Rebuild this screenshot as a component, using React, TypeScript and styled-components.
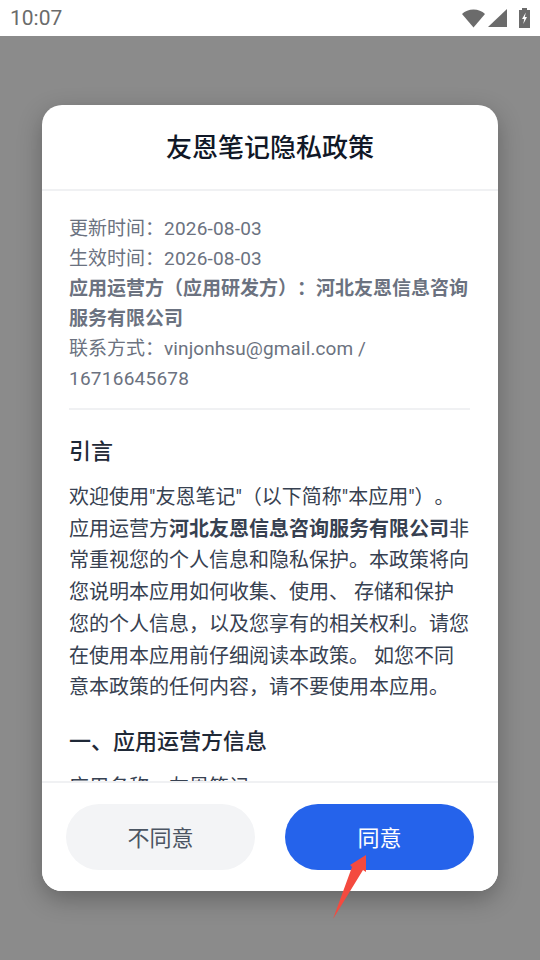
import React from 'react';
import styled, { createGlobalStyle } from 'styled-components';

// full-width punctuation used in the policy text
const COLON = '\uFF1A';
const LP = '\uFF08';
const RP = '\uFF09';
const COMMA = '\uFF0C';

const GlobalStyle = createGlobalStyle`
  html, body {
    margin: 0;
    padding: 0;
    height: 960px;
    overflow: hidden;
    background: #8b8b8b;
    font-family: Roboto, "Noto Sans CJK SC", sans-serif;
    text-spacing-trim: space-all;
  }
`;

const Page = styled.div`
  width: 540px;
  height: 960px;
  display: flex;
  flex-direction: column;
  position: relative;
  overflow: hidden;
`;

const StatusBar = styled.div`
  height: 36px;
  flex: none;
  background: #fff;
  display: flex;
  align-items: center;
  justify-content: space-between;
  padding: 0 10px 0 10px;
  color: #6b6b6b;
`;

const Clock = styled.span`
  font-size: 21px;
  line-height: 36px;
`;

const StatusIcons = styled.div`
  display: flex;
  align-items: center;
  gap: 3px;
`;

const Scrim = styled.div`
  flex: 1;
  display: flex;
  justify-content: center;
  padding-top: 69px;
  background: #8b8b8b;
`;

const Dialog = styled.div`
  width: 456px;
  height: 786px;
  background: #fff;
  border-radius: 20px;
  box-shadow: 0 8px 24px rgba(0, 0, 0, 0.28);
  display: flex;
  flex-direction: column;
  overflow: hidden;
`;

const Header = styled.div`
  height: 86px;
  flex: none;
  border-bottom: 2px solid #f0f1f3;
  display: flex;
  align-items: center;
  justify-content: center;
  padding-bottom: 4px;
  box-sizing: border-box;
`;

const Title = styled.h1`
  margin: 0;
  font-size: 26px;
  font-weight: 500;
  color: #111827;
`;

const Body = styled.div`
  flex: 1;
  min-height: 0;
  overflow: hidden;
  padding: 23px 28px 0 27px;
`;

const Meta = styled.div`
  font-size: 19px;
  line-height: 30px;
  color: #6b7280;
  padding-bottom: 14px;
  border-bottom: 2px solid #f0f1f3;
  margin-bottom: 27px;
`;

const MetaStrong = styled.strong`
  font-weight: 700;
  color: #6b7280;
`;

const Latin = styled.span<{ $spacing: number }>`
  letter-spacing: ${p => p.$spacing}px;
`;

const SectionTitle = styled.h2`
  margin: 0 0 15px;
  font-size: 22px;
  line-height: 30px;
  font-weight: 500;
  color: #1f2937;
`;

const Paragraph = styled.p`
  margin: 0 0 23px;
  font-size: 20px;
  line-height: 31.7px;
  color: #374151;
`;

const Strong = styled.strong`
  font-weight: 700;
  color: #374151;
`;

const Footer = styled.div`
  height: 110px;
  flex: none;
  border-top: 2px solid #f0f1f3;
  background: #fff;
  display: flex;
  gap: 30px;
  padding: 21px 24px 0;
  box-sizing: border-box;
`;

const ActionButton = styled.button<{ $primary?: boolean }>`
  width: 189px;
  height: 66px;
  border: none;
  border-radius: 33px;
  padding: 0 0 2px;
  font-family: inherit;
  font-size: 22px;
  background: ${p => (p.$primary ? '#2563eb' : '#f3f4f6')};
  color: ${p => (p.$primary ? '#fff' : '#4b5563')};
`;

const Arrow = styled.svg`
  position: absolute;
  left: 328px;
  top: 850px;
`;

const App = () => (
  <Page>
    <GlobalStyle />
    <StatusBar>
      <Clock>10:07</Clock>
      <StatusIcons>
        <svg width="23" height="19" viewBox="0 0 23 19">
          <path d="M0 5C3 2 7 0.500 11.500 0.500S20 2 23 5L11.500 18.500Z" fill="#6b6b6b" />
        </svg>
        <svg width="19" height="18" viewBox="0 0 19 18">
          <path d="M19 0V18H0Z" fill="#6b6b6b" />
        </svg>
        <svg width="11" height="20" viewBox="0 0 11 20" style={{ marginLeft: 9 }}>
          <path d="M3 0H8V2H11V20H0V2H3Z" fill="#6b6b6b" />
          <path d="M6.800 4.500L3 11H5.200L4.300 16L8 9H5.800Z" fill="#fff" />
        </svg>
      </StatusIcons>
    </StatusBar>
    <Scrim>
      <Dialog>
        <Header>
          <Title>友恩笔记隐私政策</Title>
        </Header>
        <Body>
          <Meta>
            {`更新时间${COLON}`}<Latin $spacing={0.2}>2026-08-03</Latin>
            <br />
            {`生效时间${COLON}`}<Latin $spacing={0.2}>2026-08-03</Latin>
            <br />
            <MetaStrong>{`应用运营方${LP}应用研发方${RP}${COLON}河北友恩信息咨询服务有限公司`}</MetaStrong>
            <br />
            {`联系方式${COLON}`}<Latin $spacing={0.1}>vinjonhsu@gmail.com / </Latin><Latin $spacing={0.25}>16716645678</Latin>
          </Meta>
          <SectionTitle>引言</SectionTitle>
          <Paragraph>
            {`欢迎使用"友恩笔记"${LP}以下简称"本应用"${RP}。应用运营方`}
            <Strong>河北友恩信息咨询服务有限公司</Strong>
            {`非常重视您的个人信息和隐私保护。本政策将向您说明本应用如何收集、使用、 存储和保护您的个人信息${COMMA}以及您享有的相关权利。请您在使用本应用前仔细阅读本政策。 如您不同意本政策的任何内容${COMMA}请不要使用本应用。`}
          </Paragraph>
          <SectionTitle>一、应用运营方信息</SectionTitle>
          <Paragraph>{`应用名称${COLON}友恩笔记`}</Paragraph>
        </Body>
        <Footer>
          <ActionButton>不同意</ActionButton>
          <ActionButton $primary>同意</ActionButton>
        </Footer>
      </Dialog>
    </Scrim>
    <Arrow width="40" height="72" viewBox="0 0 40 72">
      <path d="M5 69L24 17L22 15L38 5L38 22L35 20Z" fill="#f44a3f" />
    </Arrow>
  </Page>
);

export default App;
